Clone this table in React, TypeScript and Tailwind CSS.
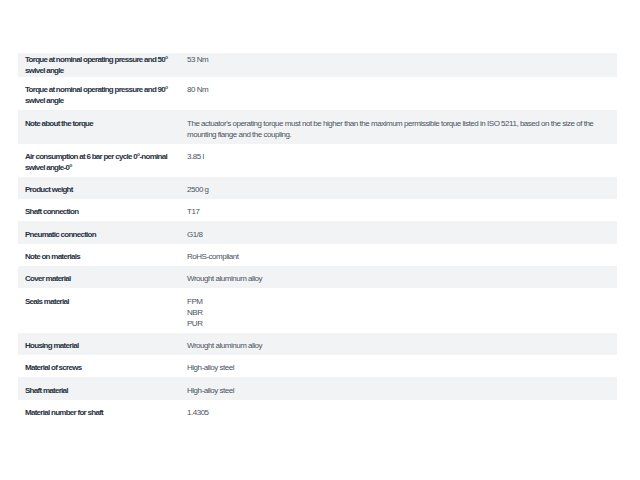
import React from "react";

type Row = { label: string[]; value: string[] };

const rows: Row[] = [
  { label: ["Torque at nominal operating pressure and 50°", "swivel angle"], value: ["53 Nm"] },
  { label: ["Torque at nominal operating pressure and 90°", "swivel angle"], value: ["80 Nm"] },
  {
    label: ["Note about the torque"],
    value: [
      "The actuator's operating torque must not be higher than the maximum permissible torque listed in ISO 5211, based on the size of the",
      "mounting flange and the coupling.",
    ],
  },
  { label: ["Air consumption at 6 bar per cycle 0°-nominal", "swivel angle-0°"], value: ["3.85 l"] },
  { label: ["Product weight"], value: ["2500 g"] },
  { label: ["Shaft connection"], value: ["T17"] },
  { label: ["Pneumatic connection"], value: ["G1/8"] },
  { label: ["Note on materials"], value: ["RoHS-compliant"] },
  { label: ["Cover material"], value: ["Wrought aluminum alloy"] },
  { label: ["Seals material"], value: ["FPM", "NBR", "PUR"] },
  { label: ["Housing material"], value: ["Wrought aluminum alloy"] },
  { label: ["Material of screws"], value: ["High-alloy steel"] },
  { label: ["Shaft material"], value: ["High-alloy steel"] },
  { label: ["Material number for shaft"], value: ["1.4305"] },
];

export default function App() {
  return (
    <div
      className="w-[640px] h-[480px] bg-white pt-[53px] overflow-hidden"
      style={{ fontFamily: '"Liberation Sans", Arial, sans-serif' }}
    >
      <div className="ml-[18px] w-[599px] flex flex-col text-[8px] leading-[11px]">
        {rows.map((r, i) => (
          <div
            key={i}
            className={`grid grid-cols-[169px_1fr] ${i % 2 === 0 ? "bg-[#f2f3f5]" : "bg-white"} ${
              i === 0 ? "pt-[0.5px] pb-[1.5px]" : "pt-[7.3px] pb-[4px]"
            }`}
          >
            <div className="pl-[7px] font-bold text-[#28323f] tracking-[-0.72px]">
              {r.label.map((l, j) => (
                <div key={j} className="whitespace-nowrap">
                  {l}
                </div>
              ))}
            </div>
            <div className="text-[#4a5361] tracking-[-0.48px]">
              {r.value.map((l, j) => (
                <div key={j} className="whitespace-nowrap">
                  {l}
                </div>
              ))}
            </div>
          </div>
        ))}
      </div>
    </div>
  );
}
